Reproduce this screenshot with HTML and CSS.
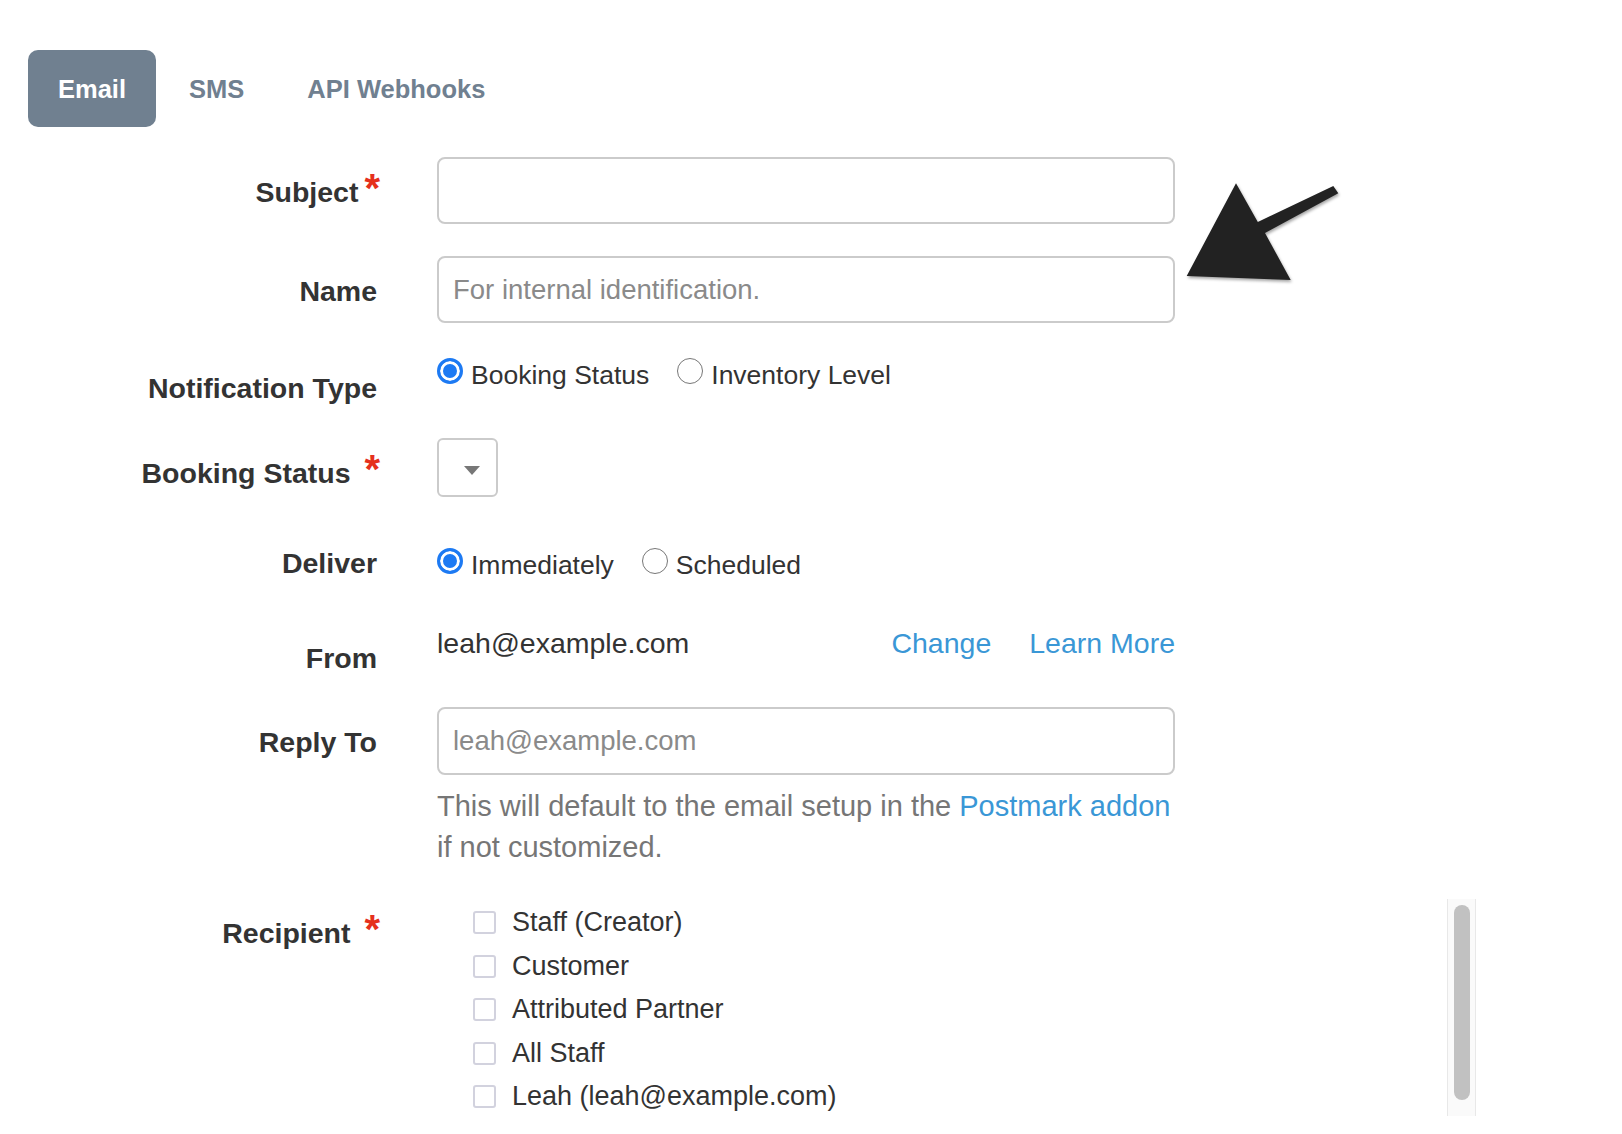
FILE: index.html
```html
<!DOCTYPE html>
<html lang="en">
<head>
<meta charset="utf-8">
<title>Notification</title>
<link rel="stylesheet" href="styles.css">
</head>
<body>
<div class="page">
  <nav class="tabs">
    <a class="tab active" href="#">Email</a>
    <a class="tab" href="#">SMS</a>
    <a class="tab" href="#">API Webhooks</a>
  </nav>

  <form class="form">
    <div class="row row-subject">
      <label class="lbl">Subject<span class="req">*</span></label>
      <div class="field"><input class="text-input" type="text"></div>
    </div>

    <div class="row row-name">
      <label class="lbl">Name</label>
      <div class="field"><input class="text-input" type="text" placeholder="For internal identification."></div>
    </div>

    <div class="row row-type">
      <label class="lbl">Notification Type</label>
      <div class="field radios radios-type">
        <label class="option"><input class="radio" type="radio" name="ntype" checked><span class="option-text">Booking Status</span></label>
        <label class="option"><input class="radio" type="radio" name="ntype"><span class="option-text">Inventory Level</span></label>
      </div>
    </div>

    <div class="row row-status">
      <label class="lbl">Booking Status <span class="req">*</span></label>
      <div class="field"><div class="select"><span class="caret"></span></div></div>
    </div>

    <div class="row row-deliver">
      <label class="lbl">Deliver</label>
      <div class="field radios radios-deliver">
        <label class="option"><input class="radio" type="radio" name="deliver" checked><span class="option-text">Immediately</span></label>
        <label class="option"><input class="radio" type="radio" name="deliver"><span class="option-text">Scheduled</span></label>
      </div>
    </div>

    <div class="row row-from">
      <label class="lbl">From</label>
      <div class="field from">
        <span class="from-email">leah@example.com</span>
        <span class="links"><a href="#">Change</a><a href="#">Learn More</a></span>
      </div>
    </div>

    <div class="row row-reply">
      <label class="lbl">Reply To</label>
      <div class="field">
        <input class="text-input tall" type="text" placeholder="leah@example.com">
        <p class="help">This will default to the email setup in the <a href="#">Postmark addon</a><br>if not customized.</p>
      </div>
    </div>

    <div class="row row-recipient">
      <label class="lbl">Recipient <span class="req">*</span></label>
      <div class="field field-recipient">
        <div class="recipients">
          <ul class="recipient-items">
            <li class="recipient"><input class="checkbox" type="checkbox"><span>Staff (Creator)</span></li>
            <li class="recipient"><input class="checkbox" type="checkbox"><span>Customer</span></li>
            <li class="recipient"><input class="checkbox" type="checkbox"><span>Attributed Partner</span></li>
            <li class="recipient"><input class="checkbox" type="checkbox"><span>All Staff</span></li>
            <li class="recipient"><input class="checkbox" type="checkbox"><span>Leah (leah@example.com)</span></li>
          </ul>
          <div class="scrollbar"><div class="thumb"></div></div>
        </div>
      </div>
    </div>
  </form>

  <svg class="arrow" width="170" height="115" viewBox="0 0 170 115" aria-hidden="true">
    <polygon points="56,8.3 77.8,46.9 153.3,11 158.3,18.3 85,58 110.7,105 6.7,101" fill="#222"/>
  </svg>
</div>
</body>
</html>
```

FILE: styles.css
```css
* { box-sizing: border-box; }

body {
  margin: 0;
  background: #fff;
  font-family: "Liberation Sans", Arial, Helvetica, sans-serif;
  color: #333;
}

.page {
  position: relative;
  padding-top: 50px;
  min-height: 1134px;
}

/* Tabs */
.tabs {
  display: flex;
  gap: 3px;
  padding-left: 28px;
}

.tab {
  display: block;
  height: 77px;
  line-height: 78px;
  padding: 0 30px;
  border-radius: 10px;
  font-size: 25.5px;
  font-weight: 700;
  color: #708090;
  text-decoration: none;
}

.tab.active {
  background: #708090;
  color: #fff;
}

/* Form layout */
.form {
  margin-top: 30px;
  display: flex;
  flex-direction: column;
}

.row {
  display: grid;
  grid-template-columns: 377px 1039px;
  column-gap: 60px;
  align-items: start;
}

.row-subject { margin-bottom: 30px; }
.row-name { margin-bottom: 28px; }
.row-type { margin-bottom: 16px; }
.row-status { margin-bottom: 21px; }
.row-deliver { margin-bottom: 26px; }
.row-from { margin-bottom: 15px; }
.row-reply { margin-bottom: 30px; }

.lbl {
  display: block;
  text-align: right;
  font-size: 28.5px;
  font-weight: 700;
  line-height: 67px;
  padding-top: 2px;
  white-space: nowrap;
  color: #333;
}

.req {
  color: #e5301c;
  font-size: 40px;
  font-weight: 700;
  line-height: 0;
  vertical-align: 0;
  margin-left: 6px;
  margin-right: -3px;
}

.field { min-width: 0; }

/* Text inputs */
.text-input {
  display: block;
  width: 738px;
  height: 67px;
  border: 2px solid #cbcbcb;
  border-radius: 8px;
  padding: 0 14px;
  font-family: "Liberation Sans", Arial, Helvetica, sans-serif;
  font-size: 27.5px;
  color: #333;
  background: #fff;
  outline: none;
}

.text-input.tall { height: 68px; }

.text-input::placeholder { color: #8a8a8a; }

/* Radios */
.radios {
  display: flex;
  gap: 28px;
}

.radios-type { padding-top: 5px; }
.radios-deliver { padding-top: 20px; }

.option {
  display: flex;
  align-items: flex-start;
  gap: 8px;
  font-size: 26.5px;
  color: #333;
}

.option-text {
  line-height: 26px;
  margin-top: 4px;
}

.radio {
  appearance: none;
  -webkit-appearance: none;
  margin: 0;
  width: 26px;
  height: 26px;
  border-radius: 50%;
  border: 1.5px solid #777;
  background: #fff;
  flex: none;
}

.radio:checked {
  border: 3px solid #1d7af3;
  background: #1d7af3;
  box-shadow: inset 0 0 0 3px #fff;
}

/* Select */
.select {
  width: 61px;
  height: 59px;
  border: 2px solid #cbcbcb;
  border-radius: 6px;
  display: flex;
  align-items: center;
  justify-content: center;
  padding: 6px 0 0 8px;
}

.caret {
  width: 0;
  height: 0;
  border-left: 8.5px solid transparent;
  border-right: 8.5px solid transparent;
  border-top: 9px solid #777;
}

/* From */
.from {
  display: flex;
  width: 738px;
  font-size: 28.5px;
  line-height: 41px;
  color: #333;
}

.from-email { flex: 1; }

.links {
  display: flex;
  gap: 38px;
}

a {
  color: #3a97d6;
  text-decoration: none;
}

/* Help */
.help {
  margin: 11px 0 0;
  width: 760px;
  font-size: 29px;
  line-height: 41px;
  color: #767676;
}

/* Recipients */
.field-recipient { padding-top: 1px; }

.recipients {
  display: flex;
  width: 1039px;
  height: 217px;
}

.recipient-items {
  flex: 1;
  list-style: none;
  margin: 0;
  padding: 2px 0 0 36px;
  overflow: hidden;
}

.recipient {
  display: flex;
  align-items: center;
  gap: 16px;
  height: 43.5px;
  font-size: 27px;
  color: #333;
  white-space: nowrap;
}

.checkbox {
  appearance: none;
  -webkit-appearance: none;
  margin: 0;
  width: 23px;
  height: 23px;
  border: 2px solid #d2d2de;
  border-radius: 3px;
  background: #fff;
  flex: none;
}

.scrollbar {
  width: 29px;
  border-left: 1px solid #e8e8e8;
  border-right: 1px solid #e8e8e8;
  background: #fafafa;
  padding: 6px 5px 16px 6px;
}

.thumb {
  height: 100%;
  border-radius: 8px;
  background: #c1c1c1;
}

/* Annotation arrow */
.arrow {
  position: absolute;
  left: 1180px;
  top: 175px;
  filter: drop-shadow(1px 2px 1.5px rgba(0, 0, 0, 0.35));
}
```
